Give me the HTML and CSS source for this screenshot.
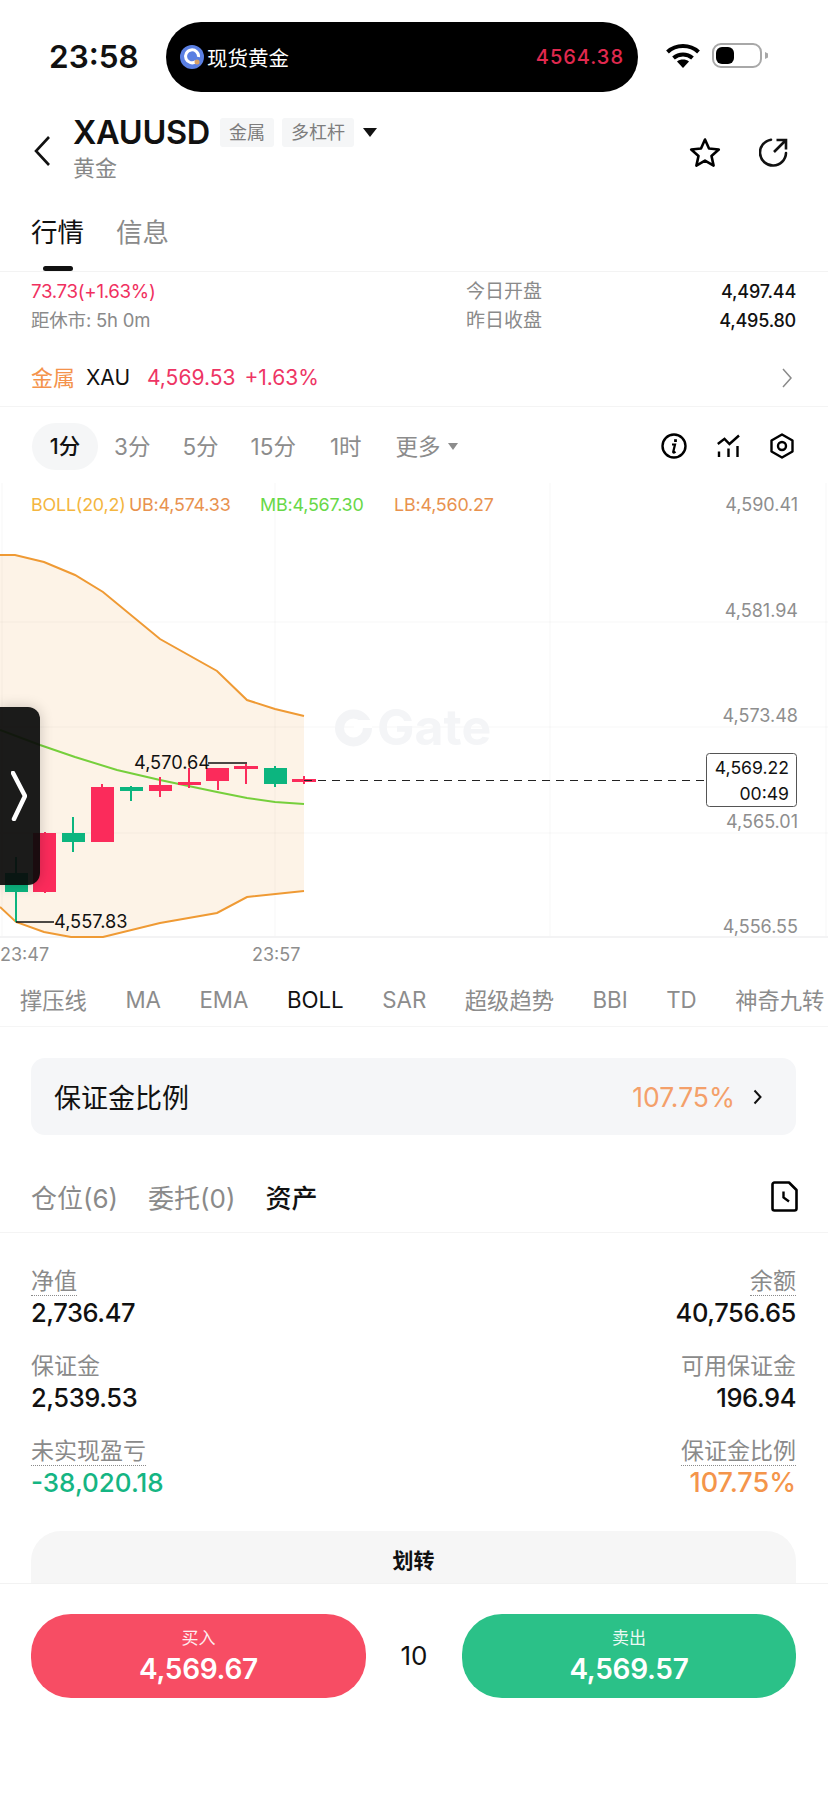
FILE: index.html
```html
<!DOCTYPE html>
<html lang="zh">
<head>
<meta charset="utf-8">
<title>XAUUSD</title>
<link rel="stylesheet" href="styles.css">
</head>
<body>
<div class="page">
  <div class="status">
    <span class="clock">23:58</span>
    <div class="island">
      <svg class="island-logo" width="24" height="24" viewBox="0 0 24 24"><circle cx="12" cy="12" r="12" fill="#5a7fe2"/><path d="M16 16.500A6.500 6.500 0 1 1 18.500 12" fill="none" stroke="#fff" stroke-width="3"/><circle cx="17" cy="17" r="2.500" fill="#d8a064"/></svg>
      <span class="island-name">现货黄金</span>
      <span class="island-price">4564.38</span>
    </div>
    <svg class="wifi" width="34" height="25" viewBox="0 0 34 25"><path d="M1.500 9C10 1 24 1 32.500 9" fill="none" stroke="#000" stroke-width="4"/><path d="M7.500 15c5.500-4.800 13.500-4.800 19 0" fill="none" stroke="#000" stroke-width="4"/><path d="M17 25l-6-6.500c3.400-2.600 8.600-2.600 12 0z" fill="#000"/></svg>
    <svg class="battery" width="57" height="25" viewBox="0 0 57 25"><rect x="1" y="1" width="48" height="23" rx="8" fill="#fff" stroke="#a8a8a8" stroke-width="2"/><rect x="4" y="4" width="18" height="17" rx="6" fill="#000"/><path d="M53 9l3 1.500v4l-3 1.500z" fill="#a8a8a8"/></svg>
  </div>

  <div class="header">
    <svg class="back" width="18" height="32" viewBox="0 0 18 32"><path d="M16 2L3 16l13 14" fill="none" stroke="#111" stroke-width="2.600"/></svg>
    <div class="title-block">
      <div class="title-row">
        <span class="symbol">XAUUSD</span>
        <span class="tag tag-metal">金属</span>
        <span class="tag tag-lev">多杠杆</span>
        <span class="caret-big"></span>
      </div>
      <div class="subtitle">黄金</div>
    </div>
    <svg class="star" width="32" height="31" viewBox="0 0 32 31"><path d="M16 2.500l4 9 9.800 1-7.300 6.500 2.100 9.600L16 23.600 7.400 28.600l2.100-9.600L2.200 12.500l9.800-1z" fill="none" stroke="#000" stroke-width="2.600" stroke-linejoin="round"/></svg>
    <svg class="share" width="30" height="29" viewBox="0 0 30 29"><path d="M12 1.700A13 13 0 1 0 27 15" fill="none" stroke="#111" stroke-width="2.600" stroke-linecap="round"/><path d="M17.500 2H27v9.500M27 2L15 14" fill="none" stroke="#111" stroke-width="2.600"/></svg>
  </div>

  <div class="main-tabs">
    <span class="main-tab is-active">行情</span>
    <span class="main-tab">信息</span>
  </div>

  <div class="quote">
    <div class="quote-grid">
      <div class="qcol">
        <span class="q-change">73.73(+1.63%)</span>
        <span class="q-timer">距休市: 5h 0m</span>
      </div>
      <div class="qcol qcol-mid">
        <span class="q-label">今日开盘</span>
        <span class="q-label">昨日收盘</span>
      </div>
      <div class="qcol qcol-right">
        <span class="q-val">4,497.44</span>
        <span class="q-val">4,495.80</span>
      </div>
    </div>
    <div class="sector">
      <span class="sector-name">金属</span>
      <span class="sector-code">XAU</span>
      <span class="sector-price">4,569.53</span>
      <span class="sector-price">+1.63%</span>
      <svg class="sector-arrow" width="10" height="20" viewBox="0 0 10 20"><path d="M1 1l8 9-8 9" fill="none" stroke="#8a8a8a" stroke-width="1.500"/></svg>
    </div>
  </div>

  <div class="frames">
    <span class="frame is-active">1分</span>
    <span class="frame">3分</span>
    <span class="frame">5分</span>
    <span class="frame">15分</span>
    <span class="frame frame-hour">1时</span>
    <span class="frame frame-more">更多<i class="caret-small"></i></span>
    <div class="frame-icons">
      <svg width="26" height="26" viewBox="0 0 26 26"><circle cx="13" cy="13" r="11.500" fill="none" stroke="#000" stroke-width="2.400"/><path d="M14.500 6.200v2.800" fill="none" stroke="#000" stroke-width="2.800"/><path d="M11 11.500h3l-1.800 7.500c0 .8 1 .8 2.300-.3" fill="none" stroke="#000" stroke-width="2.200"/></svg>
      <svg width="23" height="24" viewBox="0 0 23 24"><path d="M0.800 10L7.500 4.800 12.500 10 22 1.500" fill="none" stroke="#000" stroke-width="2.400"/><path d="M2 17.500v5.500M11.500 14.500v8.500M20.500 12v11" fill="none" stroke="#000" stroke-width="2.400"/></svg>
      <svg width="24" height="26" viewBox="0 0 24 26"><path d="M12 1.500L22.500 7.500v11L12 24.500 1.500 18.500v-11z" fill="none" stroke="#000" stroke-width="2.400" stroke-linejoin="round"/><circle cx="12" cy="13" r="4" fill="none" stroke="#000" stroke-width="2.400"/></svg>
    </div>
  </div>

  <div class="chart">
    <svg class="chart-svg" width="828" height="489" viewBox="0 483 828 489">
      <path class="band" d="M0 555L15 555 44 562 75 575 103 592 160 639 217 671 247 700 275 709 304 716V891L247 897 217 913 160 923 103 937 71 937 44 932 16 922 0 907Z"/>
      <g class="grid">
        <path d="M0 622H828M0 727H828M0 833H828"/>
        <path d="M550 483V937M826 483V937M2 483V937M275 483V937"/>
      </g>
      <path class="border-line" d="M0 937H828"/>
      <circle class="wm-ring" cx="353.500" cy="728" r="14"/>
      <path class="wm-notch" d="M354 728h18v-8h-18z"/>
      <text x="377" y="745" class="watermark">Gate</text>
      <path class="line-boll" d="M0 555L15 555 44 562 75 575 103 592 160 639 217 671 247 700 275 709 304 716"/>
      <path class="line-boll" d="M0 907L16 922 44 932 71 937 103 937 160 923 217 913 247 897 304 891"/>
      <path class="line-mid" d="M0 730L40 745 75 757 117 770 160 780 217 792 247 798 275 802 304 804"/>

      <g class="cg">
        <path d="M16 857V922M73 817V852M131 786V801M275 766V787"/>
        <rect x="5" y="873" width="23" height="19"/>
        <rect x="62" y="833" width="23" height="9"/>
        <rect x="120" y="787" width="23" height="4"/>
        <rect x="264" y="768" width="23" height="16"/>
      </g>
      <g class="cr">
        <path d="M45 832V893M102 784V787M160 777V797M189 768V788M218 781V790M246 764V784M304 776V784"/>
        <rect x="33" y="833" width="23" height="59"/>
        <rect x="91" y="787" width="23" height="55"/>
        <rect x="149" y="785" width="23" height="6"/>
        <rect x="178" y="782" width="23" height="3"/>
        <rect x="206" y="768" width="23" height="13"/>
        <rect x="234" y="766" width="24" height="3"/>
        <rect x="292" y="779" width="24" height="3"/>
      </g>
      <path class="note-line" d="M208 763H247M16 922H54"/>
      <text x="134" y="769" class="note">4,570.64</text>
      <text x="54" y="928" class="note">4,557.83</text>
      <path class="last-line" d="M304 780.500H706"/>
      <rect class="last-box" x="706.500" y="753.500" width="90" height="53" rx="3"/>
      <text x="789" y="774" class="last-text">4,569.22</text>
      <text x="789" y="800" class="last-text">00:49</text>

      <text x="31" y="511" class="leg leg-y">BOLL(20,2)</text>
      <text x="129" y="511" class="leg leg-o">UB:4,574.33</text>
      <text x="260" y="511" class="leg leg-g">MB:4,567.30</text>
      <text x="394" y="511" class="leg leg-o">LB:4,560.27</text>
      <text x="798" y="511" class="axis axis-r">4,590.41</text>
      <text x="798" y="617" class="axis axis-r">4,581.94</text>
      <text x="798" y="722" class="axis axis-r">4,573.48</text>
      <text x="798" y="828" class="axis axis-r">4,565.01</text>
      <text x="798" y="933" class="axis axis-r">4,556.55</text>
      <text x="0" y="961" class="axis">23:47</text>
      <text x="252" y="961" class="axis">23:57</text>
    </svg>
    <div class="handle">
      <svg width="16" height="50" viewBox="0 0 16 50"><path d="M2 2l12 23L3 48" fill="none" stroke="#fff" stroke-width="4.500" stroke-linecap="round" stroke-linejoin="round"/></svg>
    </div>
  </div>

  <div class="indicators">
    <span class="ind ind-1">撑压线</span>
    <span class="ind">MA</span>
    <span class="ind">EMA</span>
    <span class="ind is-active">BOLL</span>
    <span class="ind">SAR</span>
    <span class="ind">超级趋势</span>
    <span class="ind">BBI</span>
    <span class="ind">TD</span>
    <span class="ind">神奇九转</span>
  </div>

  <div class="content">
    <div class="ratio-card">
      <span class="ratio-name">保证金比例</span>
      <span class="ratio-val">107.75%</span>
      <svg width="9" height="16" viewBox="0 0 9 16"><path d="M1.500 1.500L7.500 8l-6 6.500" fill="none" stroke="#111" stroke-width="2"/></svg>
    </div>

    <div class="pos-tabs">
      <span class="pos-tab">仓位(6)</span>
      <span class="pos-tab">委托(0)</span>
      <span class="pos-tab is-active">资产</span>
      <svg class="doc" width="27" height="31" viewBox="0 0 27 31"><path d="M1.500 3.500a2 2 0 0 1 2-2h14.500L25.500 9v18.500a2 2 0 0 1-2 2h-20a2 2 0 0 1-2-2z" fill="none" stroke="#000" stroke-width="2.600" stroke-linejoin="round"/><path d="M12.500 10.500v6l5.500 4" fill="none" stroke="#000" stroke-width="2.400"/></svg>
    </div>

    <div class="stats">
      <div class="stat"><span class="stat-label dotted">净值</span><span class="stat-val">2,736.47</span></div>
      <div class="stat stat-r"><span class="stat-label dotted">余额</span><span class="stat-val">40,756.65</span></div>
      <div class="stat"><span class="stat-label">保证金</span><span class="stat-val">2,539.53</span></div>
      <div class="stat stat-r"><span class="stat-label">可用保证金</span><span class="stat-val">196.94</span></div>
      <div class="stat"><span class="stat-label dotted">未实现盈亏</span><span class="stat-val val-green">-38,020.18</span></div>
      <div class="stat stat-r"><span class="stat-label dotted">保证金比例</span><span class="stat-val val-orange">107.75%</span></div>
    </div>

    <div class="transfer">划转</div>
  </div>

  <div class="trade-bar">
    <div class="trade trade-buy"><span class="trade-label">买入</span><span class="trade-price">4,569.67</span></div>
    <span class="lever">10</span>
    <div class="trade trade-sell"><span class="trade-label">卖出</span><span class="trade-price">4,569.57</span></div>
  </div>
</div>
</body>
</html>
```
FILE: styles.css
```css
* { box-sizing: border-box; }
html, body { margin: 0; padding: 0; background: #fff; }
body { font-family: Inter, "Noto Sans CJK SC", sans-serif; color: #000; }
.page { width: 828px; height: 1795px; overflow: hidden; display: flex; flex-direction: column; }

/* status bar */
.status { height: 108px; flex: none; display: flex; align-items: flex-start; padding: 22px 0 0 49px; }
.clock { font-size: 31.500px; font-weight: 600; line-height: 70px; width: 117px; color: #111; }
.island { width: 472px; height: 70px; border-radius: 35px; background: #000; display: flex; align-items: center; padding: 0 14px; }
.island-logo { flex: none; }
.island-name { color: #fff; font-size: 20.500px; margin-left: 3px; }
.island-price { margin-left: auto; color: #e0294f; font-size: 20px; letter-spacing: 1px; font-weight: 500; }
.wifi { margin: 21px 0 0 28px; flex: none; }
.battery { margin: 21px 0 0 12px; flex: none; }

/* header */
.header { height: 82px; flex: none; display: flex; align-items: center; padding: 0 39px 0 33px; }
.back { flex: none; margin-top: 4px; }
.title-block { margin-left: 22px; flex: 1; margin-top: -2px; }
.title-row { display: flex; align-items: center; height: 38px; }
.symbol { font-size: 32.500px; font-weight: 600; color: #111; letter-spacing: -.3px; }
.tag { height: 29px; line-height: 29px; background: #f5f6f7; color: #7d7d7d; font-size: 18px; text-align: center; border-radius: 3px; }
.tag-metal { width: 54px; margin-left: 10px; }
.tag-lev { width: 72px; margin-left: 8px; }
.caret-big { width: 0; height: 0; margin-left: 9px; border-left: 7px solid transparent; border-right: 7px solid transparent; border-top: 9px solid #111; }
.subtitle { font-size: 22px; line-height: 30px; color: #888; margin-top: 2px; }
.star { flex: none; margin: 6px 0 0; }
.share { flex: none; margin: 6px 0 0 38px; }

/* tabs */
.main-tabs { height: 82px; flex: none; display: flex; gap: 32px; padding: 0 31px; border-bottom: 1px solid #f3f3f3; }
.main-tab { position: relative; font-size: 26.500px; line-height: 60px; height: 60px; margin-top: 12px; color: #8a8a8a; }
.main-tab.is-active { color: #111; }
.main-tab.is-active::after { content: ""; position: absolute; left: 12px; top: 64px; width: 30px; height: 5px; border-radius: 3px; background: #111; }

/* quote */
.quote { height: 135px; flex: none; border-bottom: 1px solid #f4f4f4; padding: 5px 32px 0 31px; }
.quote-grid { display: flex; height: 60px; }
.qcol { display: flex; flex-direction: column; width: 435px; font-size: 18px; line-height: 29px; }
.qcol-mid { width: 200px; }
.qcol-right { width: 130px; text-align: right; }
.q-change { color: #f0305f; font-size: 18.700px; letter-spacing: -.3px; }
.q-timer { color: #8a8a8a; font-size: 18.500px; letter-spacing: -.2px; }
.q-label { color: #8a8a8a; font-size: 19px; }
.q-val { color: #111; font-size: 18px; font-weight: 500; letter-spacing: -.2px; }
.sector { display: flex; align-items: center; margin-top: 26px; font-size: 22px; line-height: 30px; }
.sector-name { color: #f4934c; width: 55px; }
.sector-code { color: #111; width: 61px; font-size: 21px; }
.sector-price { color: #ee3564; margin-right: 9px; font-size: 21px; }
.sector-arrow { margin-left: auto; margin-right: 4px; }

/* time frames */
.frames { height: 76px; flex: none; display: flex; align-items: flex-start; padding: 16px 34px 0 32px; }
.frame { font-size: 22.500px; line-height: 47px; color: #8c8c8c; margin-right: 32px; white-space: nowrap; }
.frame.is-active { width: 66px; height: 47px; border-radius: 24px; text-align: center; background: #f5f6f7; color: #111; font-weight: 500; margin-right: 16px; font-size: 21.500px; }
.frame-hour { margin-left: 2px; margin-right: 34px; }
.frame-more { display: flex; align-items: center; }
.caret-small { width: 0; height: 0; margin-left: 7px; border-left: 5px solid transparent; border-right: 5px solid transparent; border-top: 7px solid #8c8c8c; }
.frame-icons { margin-left: auto; display: flex; align-items: center; gap: 30px; margin-top: 10px; }

/* chart */
.chart { height: 489px; flex: none; position: relative; }
.chart-svg { display: block; }
.grid path { stroke: rgba(20, 30, 60, .022); stroke-width: 1.500; fill: none; }
.border-line { stroke: #f3f3f4; stroke-width: 2; fill: none; }
.band { fill: #fdf3e7; }
.line-boll { fill: none; stroke: #ef9a34; stroke-width: 2; }
.line-mid { fill: none; stroke: #76cf3c; stroke-width: 2; }
.cg rect { fill: #0cb57f; }
.cg path { stroke: #0cb57f; stroke-width: 2; fill: none; }
.cr rect { fill: #fb2b5b; }
.cr path { stroke: #fb2b5b; stroke-width: 2; fill: none; }
.note-line { stroke: #111; stroke-width: 1.500; fill: none; }
.note { font-size: 18.200px; fill: #111; }
.last-line { stroke: #222; stroke-width: 1.200; stroke-dasharray: 8 6; fill: none; }
.last-box { fill: #fff; stroke: #555; stroke-width: 1; }
.last-text { font-size: 17.600px; fill: #111; text-anchor: end; }
.leg { font-size: 17.900px; letter-spacing: -.2px; }
.leg-y { fill: #f4b63f; }
.leg-o { fill: #e8924f; }
.leg-g { fill: #68d848; }
.axis { font-size: 18px; fill: #8e8e8e; }
.axis-r { text-anchor: end; }
.wm-ring { fill: none; stroke: #f3f4f6; stroke-width: 9; }
.wm-notch { fill: #fff; }
.watermark { font-size: 50px; font-weight: 700; fill: #f4f5f7; }
.handle { position: absolute; left: 0; top: 224px; width: 40px; height: 178px; border-radius: 0 12px 12px 0; background: rgba(10, 10, 10, .93); box-shadow: 0 0 14px rgba(0, 0, 0, .2); display: flex; align-items: center; padding-left: 11px; }

/* indicators */
.indicators { height: 55px; flex: none; display: flex; align-items: center; gap: 38.500px; padding: 0 0 0 20px; overflow: hidden; border-bottom: 1px solid #f5f5f5; white-space: nowrap; }
.ind { font-size: 22.300px; color: #8c8c8c; flex: none; }
.ind.is-active { color: #111; }

/* lower content */
.content { flex: 1; min-height: 0; overflow: hidden; padding: 31px 32px 0 31px; }
.ratio-card { height: 77px; border-radius: 14px; background: #f5f6f8; display: flex; align-items: center; padding: 0 34px 0 23px; }
.ratio-name { font-size: 27px; color: #111; }
.ratio-val { margin-left: auto; margin-right: 18px; font-size: 26.500px; color: #f4a06a; }
.pos-tabs { height: 98px; margin: 0 -32px 0 -31px; padding: 25px 30px 0 31px; border-bottom: 1px solid #f4f4f4; display: flex; align-items: center; gap: 30px; }
.pos-tab { font-size: 26px; color: #8a8a8a; }
.pos-tab.is-active { color: #111; font-weight: 500; }
.doc { margin-left: auto; }
.stats { display: grid; grid-template-columns: 1fr 1fr; row-gap: 17px; padding-top: 32px; }
.stat { display: flex; flex-direction: column; align-items: flex-start; height: 68px; }
.stat-r { align-items: flex-end; }
.stat-label { font-size: 23px; line-height: 32px; height: 31px; color: #8a8a8a; }
.dotted { border-bottom: 1.500px dotted #8a8a8a; }
.stat-val { font-size: 25.500px; line-height: 34px; font-weight: 500; letter-spacing: -.4px; color: #111; }
.val-green { color: #15b583; font-size: 26px; letter-spacing: 0; }
.val-orange { color: #f4954b; font-size: 27px; letter-spacing: 0; }
.transfer { height: 80px; margin-top: 28px; border-radius: 30px; background: #f6f6f6; text-align: center; line-height: 60px; font-size: 21px; font-weight: 600; color: #111; }

/* trade bar */
.trade-bar { height: 212px; flex: none; background: #fff; border-top: 1px solid #f2f2f2; display: flex; align-items: flex-start; padding: 30px 32px 0 31px; }
.trade { width: 334px; height: 84px; border-radius: 40px; display: flex; flex-direction: column; align-items: center; color: #fff; padding-top: 11px; }
.trade-buy { background: #f74d64; width: 335px; }
.trade-sell { background: #2bc188; }
.trade-label { font-size: 17px; line-height: 26px; opacity: .9; }
.trade-price { font-size: 28px; font-weight: 600; line-height: 36px; letter-spacing: -.3px; }
.lever { width: 96px; text-align: center; font-size: 26px; line-height: 84px; color: #111; }
```
